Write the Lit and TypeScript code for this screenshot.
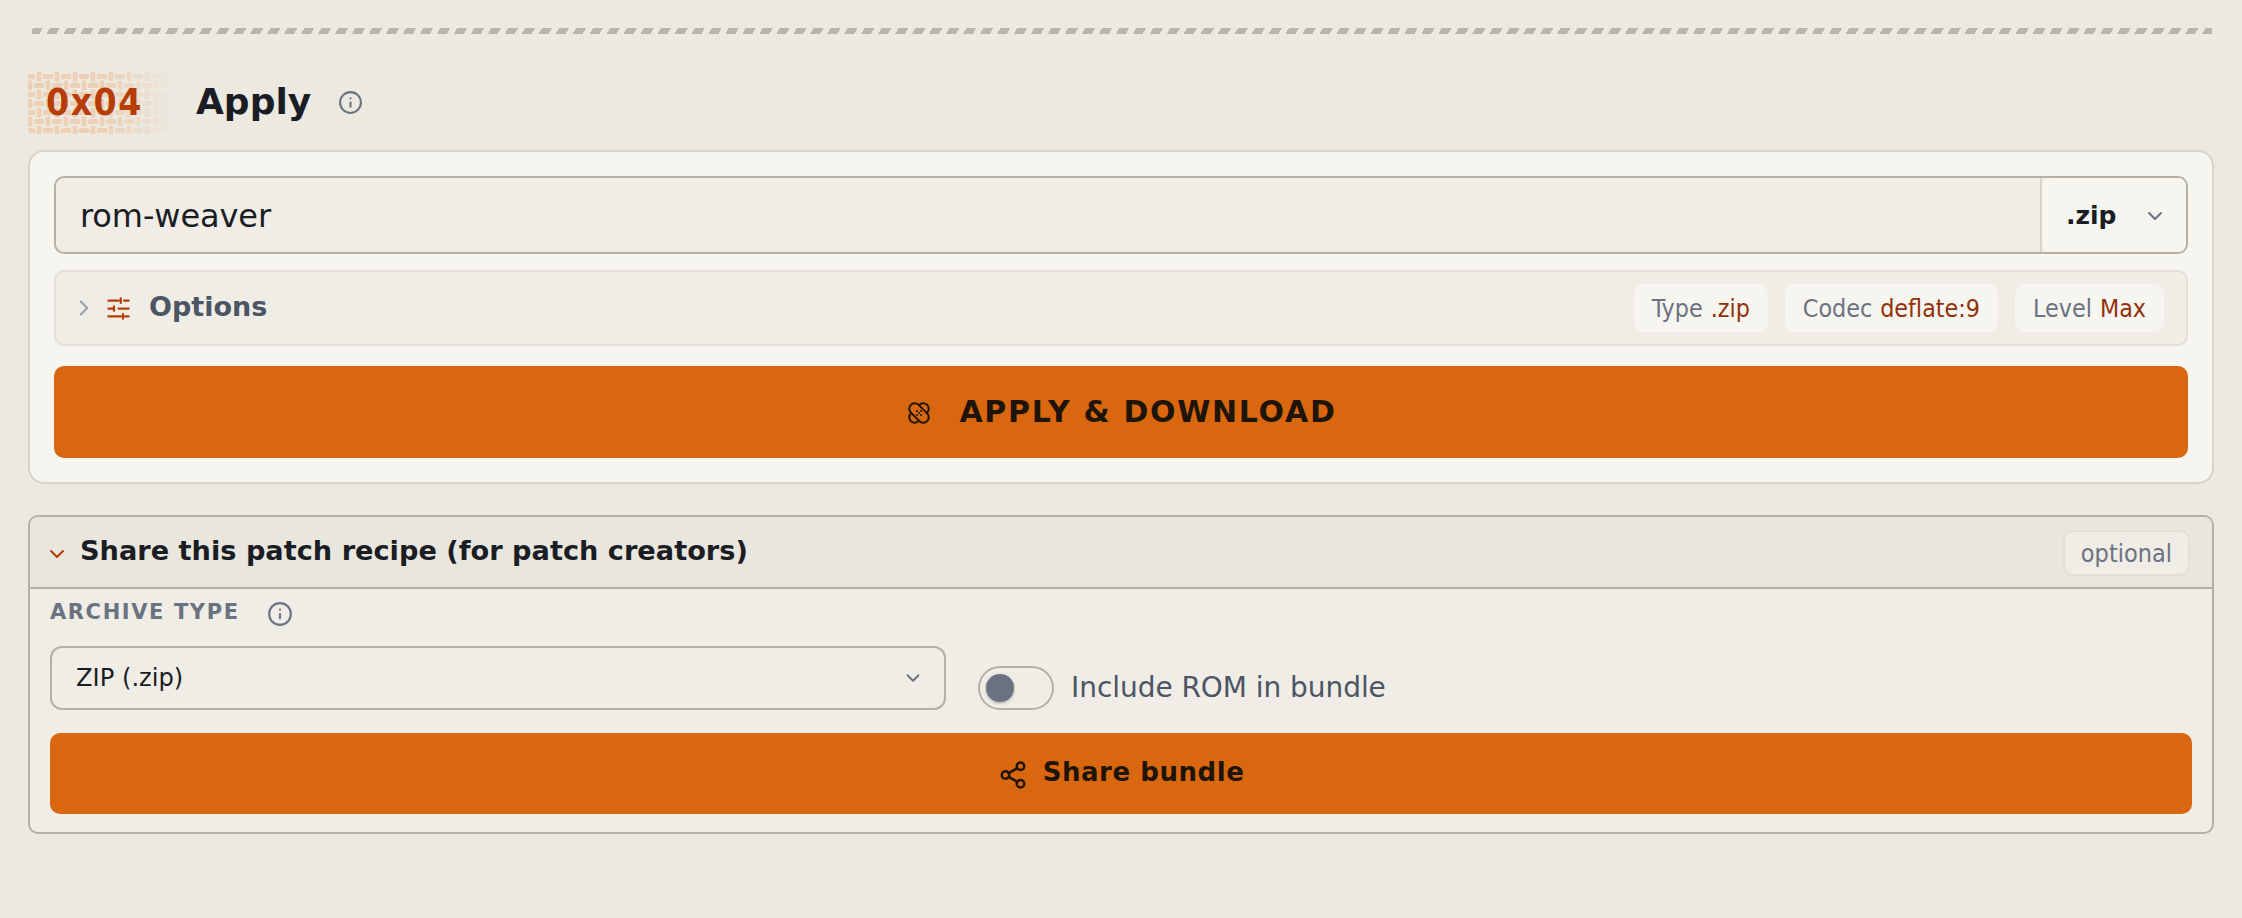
import { LitElement, html, css, svg } from "lit";
import { customElement } from "lit/decorators.js";

const info = (cls: string) => html`<svg class=${cls} viewBox="0 0 24 24" fill="none" stroke="currentColor" stroke-width="2" stroke-linecap="round" stroke-linejoin="round"><circle cx="12" cy="12" r="10"/><path d="M12 16v-4"/><path d="M12 8h.01"/></svg>`;
const chevDown = (cls: string) => html`<svg class=${cls} viewBox="0 0 24 24" fill="none" stroke="currentColor" stroke-width="2" stroke-linecap="round" stroke-linejoin="round"><path d="m6 9 6 6 6-6"/></svg>`;

@customElement("app-root")
export class AppRoot extends LitElement {
  static styles = css`
    :host { display: block; min-height: 918px; background: #ece9e1; font-family: "DejaVu Sans", sans-serif; color: #1a1d23; box-sizing: border-box; padding: 28px 28px 0 28px; }
    * { box-sizing: border-box; }
    .rule { height: 6px; margin: 0 2px 0 4px; background: repeating-linear-gradient(-60deg, #b8b6a8 0 8.6px, transparent 8.6px 14.7px); }
    .head { display: flex; align-items: center; margin-top: 38px; height: 62px; }
    .badge { width: 142px; height: 62px; font: 700 37px "DejaVu Sans Condensed", "DejaVu Sans", sans-serif; color: #b63d07; display: flex; align-items: center; padding-left: 18px; letter-spacing: 1.5px; position: relative; overflow: hidden; border-radius: 5px; }
    .badge svg { position: absolute; inset: 0; width: 100%; height: 100%; }
    .badge span { position: relative; margin-top: -2px; }
    .title { font-size: 36px; font-weight: 700; margin-left: 26px; margin-top: -3px; }
    .i1 { width: 25px; height: 25px; color: #6b7280; margin-left: 27px; margin-top: -1px; }
    .panel { margin-top: 16px; background: #f6f5f0; border: 2px solid #d6d3c9; border-radius: 16px; padding: 24px; height: 334px; display: flex; flex-direction: column; }
    .combo { display: flex; height: 78px; border: 2px solid #b3b1a3; border-radius: 10px; overflow: hidden; background: #f0ede6; }
    .name { flex: 1; font-size: 32px; padding: 1px 0 0 24px; display: flex; align-items: center; letter-spacing: -0.1px; }
    .divider { width: 2px; background: #d6d3c9; }
    .ext { width: 144px; background: #f6f5f0; border-radius: 8px 0 0 8px; display: flex; align-items: center; padding: 1px 0 0 24px; font-size: 25px; font-weight: 700; }
    .ext svg { width: 24px; height: 24px; color: #6b7280; margin-left: 26px; }
    .opts { margin-top: 16px; height: 76px; border: 2px solid #e2dfd7; border-radius: 10px; background: #f0ede6; display: flex; align-items: center; padding: 0 22px 0 15px; }
    .chev { width: 26px; height: 26px; color: #9ca3af; }
    .sliders { width: 27px; height: 27px; color: #b63d07; margin-left: 8px; }
    .optlabel { font-size: 27px; font-weight: 700; color: #4b5563; margin-left: 17px; flex: 1; margin-top: -4px; }
    .chip { height: 48px; padding: 0 18px; background: #f6f5f0; border-radius: 10px; display: flex; align-items: center; font-family: "DejaVu Sans Condensed", "DejaVu Sans", sans-serif; font-size: 24.8px; color: #6b7280; margin-left: 17px; gap: 8px; }
    .chip b { font-weight: 400; color: #92310a; }
    .go { margin-top: 20px; height: 92px; border-radius: 10px; background: #d8670f; color: #1f1408; display: flex; align-items: center; justify-content: center; font-size: 30px; font-weight: 700; letter-spacing: 1.7px; gap: 27px; padding-bottom: 2px; }
    .go svg { width: 24px; height: 24px; margin: 4px 1.5px 0; }
    .panel2 { margin-top: 31px; border: 2px solid #b3b1a3; border-radius: 10px; background: #f0ede6; height: 319px; display: flex; flex-direction: column; }
    .phead { height: 72px; border-bottom: 2px solid #b3b1a3; background: #e9e6de; border-radius: 8px 8px 0 0; display: flex; align-items: center; padding: 0 22px 0 15px; }
    .phead .c2 { width: 24px; height: 24px; color: #b63d07; margin-top: 3px; }
    .phead strong { font-size: 27.2px; flex: 1; margin-left: 11px; margin-top: -4px; }
    .pill { height: 46px; padding: 0 16px; border: 2px solid #e2dfd7; background: #f0ede6; border-radius: 10px; display: flex; align-items: center; font-family: "DejaVu Sans Condensed", "DejaVu Sans", sans-serif; font-size: 25px; color: #6b7280; margin-top: 2px; }
    .body { padding: 0 20px; display: flex; flex-direction: column; }
    .lab { display: flex; align-items: center; margin-top: 8px; height: 30px; font-size: 21px; font-weight: 700; letter-spacing: 1.6px; color: #6b7280; }
    .lab svg { width: 26px; height: 26px; margin-left: 27px; margin-top: 4px; }
    .row { display: flex; margin-top: 19px; }
    .sel { width: 896px; height: 64px; border: 2px solid #b3b1a3; border-radius: 12px; display: flex; align-items: center; justify-content: space-between; padding: 0 20px 0 24px; font-size: 24.2px; }
    .sel svg { width: 22px; height: 22px; color: #6b7280; }
    .tog { display: flex; align-items: center; margin-left: 32px; margin-top: 20px; height: 44px; }
    .track { width: 76px; height: 44px; border: 2px solid #b3b1a3; border-radius: 22px; background: #f0ede6; padding: 6px; }
    .thumb { width: 28px; height: 28px; border-radius: 50%; background: #6b7280; box-shadow: 0 1px 3px rgba(0,0,0,.3); }
    .tog span { font-size: 28px; color: #4b5563; margin-left: 17px; margin-top: -2px; letter-spacing: -0.05px; }
    .share { margin-top: 23px; height: 81px; border-radius: 10px; background: #d8670f; color: #1f1408; display: flex; align-items: center; justify-content: center; font-size: 26px; font-weight: 700; letter-spacing: .55px; gap: 15px; padding-bottom: 3px; }
    .share svg { width: 30px; height: 30px; margin-top: 6px; }
  `;

  private weave() {
    const cells = [];
    const w = 142, h = 62;
    for (let r = 0; r < 7; r++) {
      for (let c = 0; c < 17; c++) {
        const cx = 2 + c * 9;
        const cy = 4.5 + r * 9;
        const horiz = (r + c) % 2 === 0;
        const op = Math.max(0, Math.min(1, (146 - cx) / 70));
        const bw = horiz ? 10.2 : 4.8;
        const bh = horiz ? 4.8 : 10.2;
        cells.push(svg`<rect x=${cx - bw / 2} y=${cy - bh / 2} width=${bw} height=${bh} rx="1.5" fill="#eccfb4" opacity=${op.toFixed(2)} />`);
      }
    }
    return html`<svg viewBox="0 0 ${w} ${h}">${cells}</svg>`;
  }

  render() {
    return html`
      <div class="rule"></div>
      <div class="head">
        <div class="badge">${this.weave()}<span>0x04</span></div>
        <div class="title">Apply</div>
        ${info("i1")}
      </div>
      <div class="panel">
        <div class="combo">
          <div class="name">rom-weaver</div>
          <div class="divider"></div>
          <div class="ext">.zip${chevDown("")}</div>
        </div>
        <div class="opts">
          <svg class="chev" viewBox="0 0 24 24" fill="none" stroke="currentColor" stroke-width="2" stroke-linecap="round" stroke-linejoin="round"><path d="m9 6 6 6-6 6"/></svg>
          <svg class="sliders" viewBox="0 0 24 24" fill="none" stroke="currentColor" stroke-width="2" stroke-linecap="round" stroke-linejoin="round"><path d="M3 5h9M17 5h4M14 3v4M3 12h4M12 12h9M8 10v4M3 19h11M18 19h3M16 17v4"/></svg>
          <div class="optlabel">Options</div>
          <div class="chip">Type <b>.zip</b></div>
          <div class="chip">Codec <b>deflate:9</b></div>
          <div class="chip">Level <b>Max</b></div>
        </div>
        <div class="go">
          <svg viewBox="0 0 24 24" fill="none" stroke="currentColor" stroke-width="2" stroke-linecap="round" stroke-linejoin="round">
            <rect x="-11.5" y="-5.5" width="23" height="11" rx="5.5" transform="translate(12 12) rotate(45)"/>
            <path transform="translate(12 12) rotate(-45)" d="M-5.5-5.5H-6A5.5 5.5 0 0 0-6 5.5H-5.5M5.5-5.5H6A5.5 5.5 0 0 1 6 5.5H5.5"/>
            <path d="M12 12h.01M10 10h.01M14 14h.01M14 10h.01M10 14h.01"/>
          </svg>
          <span>APPLY &amp; DOWNLOAD</span>
        </div>
      </div>
      <div class="panel2">
        <div class="phead">
          ${chevDown("c2")}
          <strong>Share this patch recipe (for patch creators)</strong>
          <div class="pill">optional</div>
        </div>
        <div class="body">
          <div class="lab">ARCHIVE TYPE ${info("")}</div>
          <div class="row">
            <div class="sel">ZIP (.zip)${chevDown("")}</div>
            <div class="tog"><div class="track"><div class="thumb"></div></div><span>Include ROM in bundle</span></div>
          </div>
          <div class="share">
            <svg viewBox="0 0 24 24" fill="none" stroke="currentColor" stroke-width="2" stroke-linecap="round" stroke-linejoin="round"><circle cx="18" cy="5" r="3"/><circle cx="6" cy="12" r="3"/><circle cx="18" cy="19" r="3"/><path d="m8.59 13.51 6.83 3.98M15.41 6.51l-6.82 3.98"/></svg>
            <span>Share bundle</span>
          </div>
        </div>
      </div>
    `;
  }
}
